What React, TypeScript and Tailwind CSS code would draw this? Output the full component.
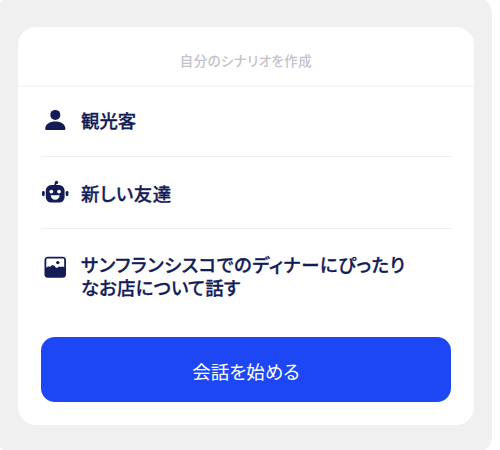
import type { ReactNode } from 'react'

function PersonIcon() {
  return (
    <svg viewBox="0 0 28 28" className="size-7" fill="currentColor">
      <circle cx="14.3" cy="7.9" r="5" />
      <path d="M4.2 21.8c0-4.6 4.4-7.3 10.1-7.3s10.1 2.700 10.100 7.300c0 .8-.5 1.200-1.300 1.200H5.500c-.8 0-1.300-.4-1.300-1.200Z" />
    </svg>
  )
}

function RobotIcon() {
  return (
    <svg viewBox="0 0 28 28" className="size-7" fill="currentColor">
      <path d="M14 7c0-1.8.2-2.600 1.300-3.300" fill="none" stroke="currentColor" strokeWidth="1.8" />
      <circle cx="15.5" cy="3.5" r="1.7" />
      <rect x="4.8" y="6.1" width="18.8" height="17.4" rx="5.3" />
      <rect x="1" y="12" width="2.7" height="5.2" rx="1.35" />
      <rect x="24.7" y="12" width="2.7" height="5.2" rx="1.35" />
      <circle cx="10.3" cy="12.6" r="1.9" fill="white" />
      <circle cx="18" cy="12.6" r="1.9" fill="white" />
      <path d="M9.700 16.300h9c-.3 2.900-2 4.500-4.500 4.500s-4.200-1.600-4.500-4.500Z" fill="white" />
    </svg>
  )
}

function PictureIcon() {
  return (
    <svg viewBox="0 0 28 28" className="size-7" fill="currentColor">
      <rect x="3.5" y="3.8" width="21.5" height="21" rx="3.5" />
      <path
        d="M5.300 7c0-.9.5-1.400 1.400-1.400h15.100c.9 0 1.400.5 1.400 1.400v7.600c-.8-1.300-2.300-1.600-3.300-.5-.9-.9-2.200-.8-2.900.1-.6.8-1.700.8-2.500 0-1.400-2.500-4.200-2.600-5.300-.3-1.200-.7-2.900-.3-3.900 1.100Z"
        fill="white"
      />
      <circle cx="16.8" cy="9.6" r="1.7" />
    </svg>
  )
}

function Row({ icon, children }: { icon: ReactNode; children: ReactNode }) {
  return (
    <div className="flex gap-3">
      <span className="shrink-0">{icon}</span>
      <div className="pt-0.5 text-[18.4px] leading-[23px] font-medium whitespace-nowrap [-webkit-text-stroke:0.3px_#141c58] [font-feature-settings:'palt']">
        {children}
      </div>
    </div>
  )
}

export default function App() {
  return (
    <div className="h-[450px] w-[500px] overflow-hidden bg-white font-['Noto_Sans_CJK_JP',sans-serif] text-[#141c58]">
      <div className="-mt-1 -ml-1 h-[458px] w-[496px] rounded-[18px] bg-[#f0f0f0] pt-[31px] pl-[22px]">
        <main className="h-[398px] w-[456px] rounded-[18px] bg-white">
          <header className="flex h-[60px] items-center justify-center border-b-2 border-[#f7f7f7] pt-2">
            <h1 className="text-[13.4px] font-medium tracking-[0.5px] text-[#c2c3cb] [font-feature-settings:'palt']">
              自分のシナリオを作成
            </h1>
          </header>

          <div className="mx-[23px]">
            <div className="h-[70px] border-b border-[#efeff1] pt-5">
              <Row icon={<PersonIcon />}>観光客</Row>
            </div>
            <div className="h-[72px] border-b border-[#efeff1] pt-[22px]">
              <Row icon={<RobotIcon />}>
                <p className="pt-px tracking-[0.5px]">新しい友達</p>
              </Row>
            </div>
            <div className="h-[108px] pt-6">
              <Row icon={<PictureIcon />}>
                <div className="-mt-0.5">
                  <p className="tracking-[0.48px]">サンフランシスコでのディナーにぴったり</p>
                  <p className="tracking-[0.2px]">なお店について話す</p>
                </div>
              </Row>
            </div>
            <button className="flex h-[65px] w-[410px] items-center justify-center rounded-[14px] bg-[#1d47f5] pt-[5px] text-[18.5px] text-white [font-feature-settings:'palt']">
              会話を始める
            </button>
          </div>
        </main>
      </div>
    </div>
  )
}
